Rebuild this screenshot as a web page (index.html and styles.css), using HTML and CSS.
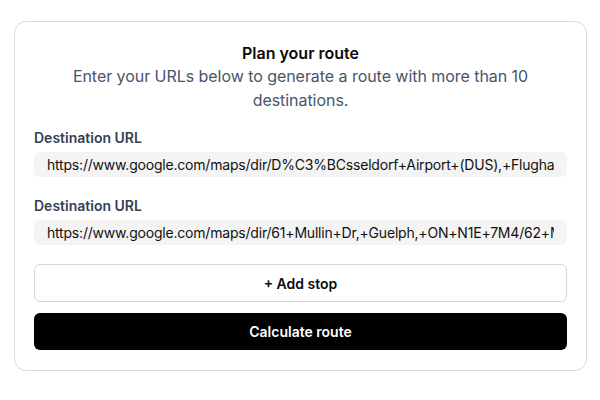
FILE: index.html
```html
<!DOCTYPE html>
<html lang="en">
<head>
<meta charset="utf-8">
<title>Plan your route</title>
<link rel="stylesheet" href="styles.css">
</head>
<body>
<main class="card">
  <header class="head">
    <h1 class="title">Plan your route</h1>
    <p class="subtitle">Enter your URLs below to generate a route with more than 10 destinations.</p>
  </header>
  <div class="field">
    <label class="label">Destination URL</label>
    <input class="input" type="text" value="https://www.google.com/maps/dir/D%C3%BCsseldorf+Airport+(DUS),+Flughafenstra%C3%9Fe,+D%C3%BCsseldorf">
  </div>
  <div class="field">
    <label class="label">Destination URL</label>
    <input class="input" type="text" value="https://www.google.com/maps/dir/61+Mullin+Dr,+Guelph,+ON+N1E+7M4/62+Mullin+Dr">
  </div>
  <div class="actions">
    <button class="btn btn-outline" type="button">+ Add stop</button>
    <button class="btn btn-primary" type="button">Calculate route</button>
  </div>
</main>
</body>
</html>
```
FILE: styles.css
```css
* { box-sizing: border-box; }
html, body { margin: 0; background: #ffffff; }
body {
  padding: 21px 14px 0 14px;
  font-family: Inter, "Noto Sans", "Liberation Sans", sans-serif;
  color: #0a0a0a;
}
.card {
  border: 1px solid #d9dbe1;
  border-radius: 12px;
  padding: 20px 19px 20px 19px;
  display: flex;
  flex-direction: column;
  width: 573px;
}
.head { text-align: center; margin-bottom: 16px; }
.title {
  margin: 0;
  font-size: 16px;
  line-height: 22px;
  font-weight: 600;
  color: #0a0a0a;
}
.subtitle {
  margin: 0;
  font-size: 16px;
  line-height: 24px;
  letter-spacing: -0.05px;
  color: #475569;
  padding: 0 20px;
}
.field {
  display: flex;
  flex-direction: column;
  gap: 4px;
  margin-bottom: 19px;
}
.label {
  font-size: 14px;
  line-height: 20px;
  font-weight: 600;
  color: #334155;
}
.input {
  height: 25px;
  border: none;
  border-radius: 6px;
  background: #f4f4f5;
  padding: 0 13px;
  font-family: inherit;
  font-size: 14px;
  letter-spacing: -0.2px;
  color: #111111;
  outline: none;
  width: 100%;
}
.actions {
  display: flex;
  flex-direction: column;
  gap: 11px;
}
.btn {
  font-family: inherit;
  font-size: 14px;
  font-weight: 600;
  border-radius: 6px;
  width: 100%;
  cursor: pointer;
}
.btn-outline {
  height: 38px;
  background: #ffffff;
  border: 1px solid #d4d6dc;
  color: #0a0a0a;
}
.btn-primary {
  height: 37px;
  background: #000000;
  border: none;
  color: #ffffff;
}
```
